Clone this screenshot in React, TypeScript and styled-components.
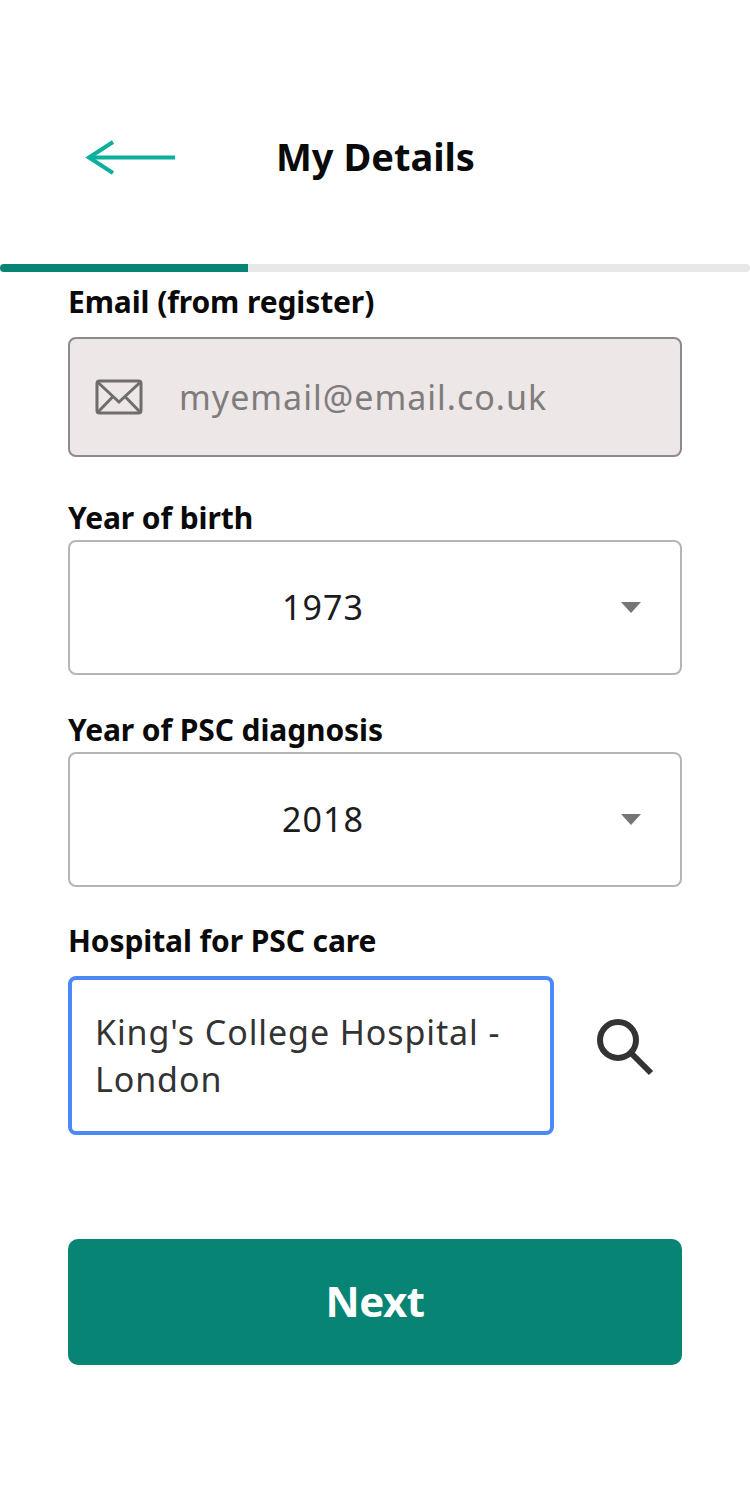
import { createGlobalStyle, styled } from "styled-components";

const GlobalStyle = createGlobalStyle`
  html, body {
    margin: 0;
    padding: 0;
    background: #fff;
    font-family: "Noto Sans", "Open Sans", sans-serif;
  }
  * {
    box-sizing: border-box;
  }
`;

const Page = styled.div`
  width: 750px;
  height: 1500px;
  display: flex;
  flex-direction: column;
`;

const Header = styled.header`
  height: 264px;
  padding: 138px 0 0 85px;
  display: flex;
  align-items: flex-start;
`;

const BackButton = styled.div`
  width: 92px;
  height: 40px;
  display: flex;
  align-items: center;
`;

const Title = styled.h1`
  margin: -2px 0 0 99px;
  font-size: 38px;
  line-height: 40px;
  font-weight: 700;
  color: #0a0a0a;
`;

const Progress = styled.div`
  height: 8px;
  background: #e8e8e8;
  border-radius: 4px;
  overflow: hidden;
`;

const ProgressFill = styled.div`
  height: 100%;
  background: #088474;
`;

const Form = styled.form`
  padding: 14px 68px 0;
  display: flex;
  flex-direction: column;
`;

const Label = styled.div<{ $top?: number; $bottom?: number }>`
  height: 32px;
  line-height: 32px;
  margin-top: ${(p) => p.$top ?? 0}px;
  margin-bottom: ${(p) => p.$bottom ?? 0}px;
  font-size: 30px;
  font-weight: 700;
  color: #0a0a0a;
  letter-spacing: -0.1px;
  white-space: nowrap;
`;

const EmailField = styled.div`
  height: 120px;
  padding-left: 25px;
  display: flex;
  align-items: center;
  background: #ede7e7;
  border: 2px solid #8c8a8a;
  border-radius: 8px;
`;

const EmailText = styled.span`
  margin-left: 36px;
  font-size: 34px;
  color: #7f7c7c;
  letter-spacing: 1px;
`;

const Select = styled.div`
  position: relative;
  height: 135px;
  display: flex;
  align-items: center;
  justify-content: center;
  padding: 0 104px 2px 0;
  border: 2px solid #b5b5b5;
  border-radius: 8px;
  font-size: 34px;
  letter-spacing: 1px;
  color: #1c1c1c;
`;

const Caret = styled.span`
  position: absolute;
  right: 39px;
  top: 60px;
  width: 0;
  height: 0;
  border-left: 10px solid transparent;
  border-right: 10px solid transparent;
  border-top: 11px solid #757575;
`;

const HospitalRow = styled.div`
  display: flex;
  align-items: center;
`;

const HospitalInput = styled.div`
  width: 486px;
  height: 159px;
  padding: 29px 23px 0;
  border: 4px solid #4d88f7;
  border-radius: 8px;
  font-size: 34px;
  line-height: 47px;
  color: #333;
  letter-spacing: 0.9px;
`;

const SearchButton = styled.div`
  margin: -17px 0 0 41px;
  display: flex;
`;

const NextButton = styled.button`
  height: 126px;
  margin-top: 104px;
  padding: 0 0 4px;
  border: none;
  border-radius: 10px;
  background: #088474;
  color: #fff;
  font-family: inherit;
  font-size: 42px;
  font-weight: 700;
  letter-spacing: -0.5px;
`;

const App = () => {
  return (
    <Page>
      <GlobalStyle />
      <Header>
        <BackButton>
          <svg width="92" height="40" viewBox="0 0 92 40" fill="none" stroke="#0bb09c" strokeWidth="4">
            <path d="M90 19.5H5" />
            <path d="M28 4 4 19.5 28 35" />
          </svg>
        </BackButton>
        <Title>My Details</Title>
      </Header>
      <Progress>
        <ProgressFill style={{ width: `${(248 / 750) * 100}%` }} />
      </Progress>
      <Form>
        <Label $bottom={19}>Email (from register)</Label>
        <EmailField>
          <svg width="48" height="36" viewBox="0 0 48 36" fill="none" stroke="#6f6d6d" strokeWidth="3">
            <rect x="2" y="2" width="44" height="32" rx="2.5" />
            <path d="M2.5 3 24 23 45.5 3" />
            <path d="M3 33 18 17.5M45 33 30 17.5" />
          </svg>
          <EmailText>myemail@email.co.uk</EmailText>
        </EmailField>
        <Label $top={45} $bottom={6}>Year of birth</Label>
        <Select>
          1973
          <Caret />
        </Select>
        <Label $top={39} $bottom={6}>Year of PSC diagnosis</Label>
        <Select>
          2018
          <Caret />
        </Select>
        <Label $top={38} $bottom={19}>Hospital for PSC care</Label>
        <HospitalRow>
          <HospitalInput>King's College Hospital - London</HospitalInput>
          <SearchButton>
            <svg width="60" height="60" viewBox="0 0 60 60" fill="none" stroke="#333" strokeWidth="6">
              <circle cx="23" cy="23" r="18" />
              <path d="M36 36 56 56" />
            </svg>
          </SearchButton>
        </HospitalRow>
        <NextButton type="button">Next</NextButton>
      </Form>
    </Page>
  );
};

export default App;
